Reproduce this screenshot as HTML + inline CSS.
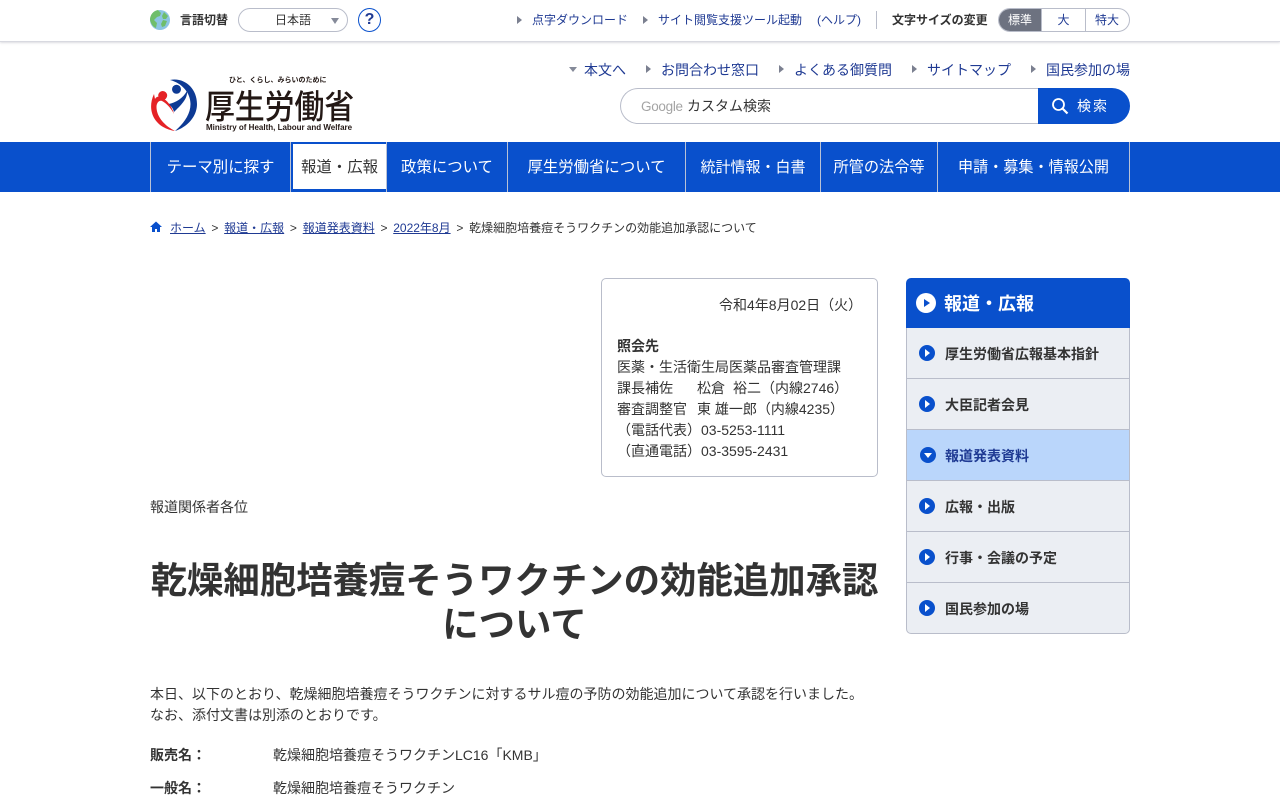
<!DOCTYPE html>
<html lang="ja"><head><meta charset="utf-8"><title>乾燥細胞培養痘そうワクチンの効能追加承認について</title>
<style>
html,body{margin:0;padding:0;width:1280px;height:800px;overflow:hidden;background:#fff;}
body{font-family:"Liberation Sans","Noto Sans CJK JP",sans-serif;color:#333;font-size:14px;position:relative;}
.a{position:absolute;white-space:nowrap;}
a{color:inherit;text-decoration:none;}
.lk{color:#1f3a93;}
.tri{position:absolute;width:0;height:0;border-left:5px solid #7b8090;border-top:4px solid transparent;border-bottom:4px solid transparent;}
.nav{position:absolute;top:142px;height:50px;left:0;width:1280px;background:#0950cc;}
.nav div{position:absolute;top:0;height:50px;line-height:51px;color:#fff;font-size:15.4px;text-align:center;border-left:1px solid #b9c2d6;box-sizing:border-box;}
.side{position:absolute;left:906px;width:224px;box-sizing:border-box;height:51px;background:#ebeef3;border:1px solid #b9bdca;border-top:0;font-weight:bold;font-size:14px;line-height:52px;padding-left:38px;color:#333;}
.dot{position:absolute;left:12px;top:17px;width:16px;height:16px;border-radius:50%;background:#0950cc;}
.dot:after{content:"";position:absolute;left:6px;top:4px;border-left:5px solid #fff;border-top:4px solid transparent;border-bottom:4px solid transparent;}
.dot.dn:after{left:4px;top:6px;border-top:5px solid #fff;border-left:4px solid transparent;border-right:4px solid transparent;border-bottom:0;}
</style></head><body>

<div class="a" style="left:0;top:0;width:1280px;height:41px;border-bottom:1px solid #d8d9e0;box-shadow:0 1px 2px rgba(120,120,140,.25);"></div>
<svg class="a" style="left:150px;top:10px" width="20" height="20" viewBox="0 0 20 20"><circle cx="10" cy="10" r="10" fill="#8cc5e3"/><path d="M8 0C3 1 0 5 0 10c1 4 3 7 6 8l1-5-3-3 3-3 3-1 1-3zM14 2l4 4-2 3-3 0-1-3zM13 10l4 1-2 5-3 1-1-3z" fill="#6fbe6b"/></svg>
<div class="a" style="left:180px;top:11px;font-size:12px;font-weight:bold;line-height:18px;">言語切替</div>
<div class="a" style="left:238px;top:8px;width:110px;height:24px;box-sizing:border-box;border:1px solid #b9bdca;border-radius:12px;font-size:12px;line-height:23px;text-align:center;"><span>日本語</span></div>
<div class="a" style="left:331px;top:18px;width:0;height:0;border-top:6px solid #858a99;border-left:4px solid transparent;border-right:4px solid transparent;"></div>
<div class="a" style="left:358px;top:8px;width:23px;height:24px;box-sizing:border-box;border:1.5px solid #0950cc;border-radius:50%;color:#1f3a93;font-weight:bold;font-size:16px;line-height:22px;text-align:center;background:#fff;">?</div>

<i class="tri" style="left:517px;top:16px"></i>
<div class="a lk" style="left:532px;top:11px;font-size:12px;line-height:18px;">点字ダウンロード</div>
<i class="tri" style="left:643px;top:16px"></i>
<div class="a lk" style="left:658px;top:11px;font-size:12px;line-height:18px;">サイト閲覧支援ツール起動</div>
<div class="a lk" style="left:817px;top:11px;font-size:12px;line-height:18px;">(ヘルプ)</div>
<div class="a" style="left:876px;top:11px;width:1px;height:18px;background:#b9bdca;"></div>
<div class="a" style="left:892px;top:11px;font-size:12px;font-weight:bold;line-height:18px;">文字サイズの変更</div>
<div class="a" style="left:998px;top:8px;width:132px;height:24px;box-sizing:border-box;border:1px solid #b9bdca;border-radius:12px;overflow:hidden;font-size:12px;line-height:22px;text-align:center;">
<div class="a" style="left:0;top:0;width:42px;height:22px;background:#6d7280;color:#fff;">標準</div>
<div class="a lk" style="left:42px;top:0;width:43px;height:22px;border-left:1px solid #b9bdca;border-right:1px solid #b9bdca;">大</div>
<div class="a lk" style="left:86px;top:0;width:44px;height:22px;">特大</div>
</div>

<svg class="a" style="left:150px;top:79px" width="48" height="53" viewBox="0 0 48 53">
<path d="M20 1C34-2 47 9 47 25 47 38 37 48 25 52 33 45 40.500 36 40.500 25 40.500 14 32 4 20 1Z" fill="#0d3a94"/>
<path d="M37 12C38 20 30 27 24 33 23 29 21 27 18 25 26 24 33 19 37 12Z" fill="#0d3a94"/>
<circle cx="26.500" cy="10.300" r="4.500" fill="#0d3a94"/>
<path d="M4 15C-4 32 5 49 25 52 15 47 6.500 38 6.500 28 6.500 24 9 21 12 22 16 24 21 29 24 35 22 27 16 20 11 18 8 17 6 18 5 20Z" fill="#e52226"/>
<circle cx="12.700" cy="16.500" r="4.500" fill="#e52226"/>
</svg>
<div class="a" style="left:229px;top:75px;font-size:7px;line-height:11px;font-weight:bold;color:#231815;font-family:'Noto Sans CJK JP',sans-serif;">ひと、くらし、みらいのために</div>
<div class="a" style="left:205px;top:84px;font-size:30px;line-height:40px;font-weight:500;color:#231815;font-family:'Noto Sans CJK JP',sans-serif;transform:scaleY(1.12);letter-spacing:-.2px;">厚生労働省</div>
<div class="a" style="left:206px;top:122px;font-size:8px;line-height:11px;font-weight:bold;color:#231815;">Ministry of Health, Labour and Welfare</div>

<div class="a" style="left:569px;top:67px;width:0;height:0;border-top:5px solid #858a99;border-left:4px solid transparent;border-right:4px solid transparent;"></div>
<div class="a lk" style="left:584px;top:60px;line-height:21px;">本文へ</div>
<i class="tri" style="left:646px;top:65px"></i>
<div class="a lk" style="left:661px;top:60px;line-height:21px;">お問合わせ窓口</div>
<i class="tri" style="left:779px;top:65px"></i>
<div class="a lk" style="left:794px;top:60px;line-height:21px;">よくある御質問</div>
<i class="tri" style="left:912px;top:65px"></i>
<div class="a lk" style="left:927px;top:60px;line-height:21px;">サイトマップ</div>
<i class="tri" style="left:1031px;top:65px"></i>
<div class="a lk" style="left:1046px;top:60px;line-height:21px;">国民参加の場</div>

<div class="a" style="left:620px;top:88px;width:420px;height:36px;box-sizing:border-box;border:1px solid #b9bdca;border-right:0;border-radius:18px 0 0 18px;"></div>
<div class="a" style="left:641px;top:97px;font-size:13.5px;line-height:19px;color:#a4a4a4;letter-spacing:-.3px;">Google</div>
<div class="a" style="left:687px;top:96px;line-height:21px;">カスタム検索</div>
<div class="a" style="left:1038px;top:88px;width:92px;height:36px;background:#0950cc;border-radius:0 18px 18px 0;"></div>
<svg class="a" style="left:1051px;top:97px" width="18" height="18" viewBox="0 0 18 18"><circle cx="7.500" cy="7.500" r="5.500" fill="none" stroke="#fff" stroke-width="1.800"/><path d="M11.500 11.500L16.500 16.500" stroke="#fff" stroke-width="2.200"/></svg>
<div class="a" style="left:1077px;top:96px;color:#fff;line-height:21px;letter-spacing:2px;">検索</div>

<div class="nav">
<div style="left:150px;width:140px;">テーマ別に探す</div>
<div style="left:290px;width:97px;border-right:1px solid #b9c2d6;"><span style="position:absolute;left:2px;top:2px;width:93px;height:45px;background:#fff;color:#333;line-height:47px;">報道・広報</span></div>
<div style="left:387px;width:120px;border-left:0;">政策について</div>
<div style="left:507px;width:178px;">厚生労働省について</div>
<div style="left:685px;width:135px;font-size:15px;">統計情報・白書</div>
<div style="left:820px;width:117px;font-size:15.2px;">所管の法令等</div>
<div style="left:937px;width:193px;border-right:1px solid #b9c2d6;font-size:15.1px;">申請・募集・情報公開</div>
</div>

<svg class="a" style="left:150px;top:221px" width="12" height="12" viewBox="0 0 12 12"><path d="M6 0.500L0 6h2v5h3V8h2v3h3V6h2z" fill="#0950cc"/></svg>
<div class="a" style="left:170px;top:219px;font-size:12px;line-height:18px;">
<a class="lk" style="text-decoration:underline;">ホーム</a><span style="margin:0 5.750px;">&gt;</span><a class="lk" style="text-decoration:underline;">報道・広報</a><span style="margin:0 5.750px;">&gt;</span><a class="lk" style="text-decoration:underline;">報道発表資料</a><span style="margin:0 5.750px;">&gt;</span><a class="lk" style="text-decoration:underline;">2022年8月</a><span style="margin:0 5.750px;">&gt;</span>乾燥細胞培養痘そうワクチンの効能追加承認について
</div>

<div class="a" style="left:601px;top:278px;width:277px;height:199px;box-sizing:border-box;border:1px solid #b9bdca;border-radius:5px;"></div>
<div class="a" style="left:719px;top:295px;line-height:21px;">令和4年8月02日（火）</div>
<div class="a" style="left:617px;top:336px;line-height:21px;"><b>照会先</b><br>医薬・生活衛生局医薬品審査管理課<br>課長補佐<span style="margin-left:24px">松倉</span><span style="margin-left:8px">裕二（内線2746）</span><br>審査調整官<span style="margin-left:10px">東 雄一郎（内線4235）</span><br>（電話代表）03-5253-1111<br>（直通電話）03-3595-2431</div>

<div class="a" style="left:150px;top:497px;line-height:21px;">報道関係者各位</div>
<div class="a" style="left:150px;top:559px;width:729px;text-align:center;font-size:36.4px;font-weight:bold;line-height:43.680px;white-space:normal;">乾燥細胞培養痘そうワクチンの効能追加承認について</div>
<div class="a" style="left:150px;top:684px;line-height:21px;">本日、以下のとおり、乾燥細胞培養痘そうワクチンに対するサル痘の予防の効能追加について承認を行いました。<br>なお、添付文書は別添のとおりです。</div>
<div class="a" style="left:150px;top:745px;line-height:21px;font-weight:bold;">販売名：</div>
<div class="a" style="left:273px;top:745px;line-height:21px;">乾燥細胞培養痘そうワクチンLC16「KMB」</div>
<div class="a" style="left:150px;top:778px;line-height:21px;font-weight:bold;">一般名：</div>
<div class="a" style="left:273px;top:778px;line-height:21px;">乾燥細胞培養痘そうワクチン</div>

<div class="a" style="left:906px;top:278px;width:224px;height:50px;background:#0950cc;border-radius:5px 5px 0 0;color:#fff;font-size:18px;font-weight:bold;line-height:52px;"><span style="position:absolute;left:38px;">報道・広報</span>
<span style="position:absolute;left:10px;top:15px;width:20px;height:20px;border-radius:50%;background:#fff;"></span><span style="position:absolute;left:18px;top:21px;border-left:6px solid #0950cc;border-top:4px solid transparent;border-bottom:4px solid transparent;"></span></div>
<div class="side" style="top:328px;"><i class="dot"></i>厚生労働省広報基本指針</div>
<div class="side" style="top:379px;"><i class="dot"></i>大臣記者会見</div>
<div class="side" style="top:430px;background:#bad6fb;color:#1f3a93;"><i class="dot dn" style="left:13px;"></i>報道発表資料</div>
<div class="side" style="top:481px;"><i class="dot"></i>広報・出版</div>
<div class="side" style="top:532px;"><i class="dot"></i>行事・会議の予定</div>
<div class="side" style="top:583px;border-radius:0 0 5px 5px;"><i class="dot"></i>国民参加の場</div>
</body></html>
